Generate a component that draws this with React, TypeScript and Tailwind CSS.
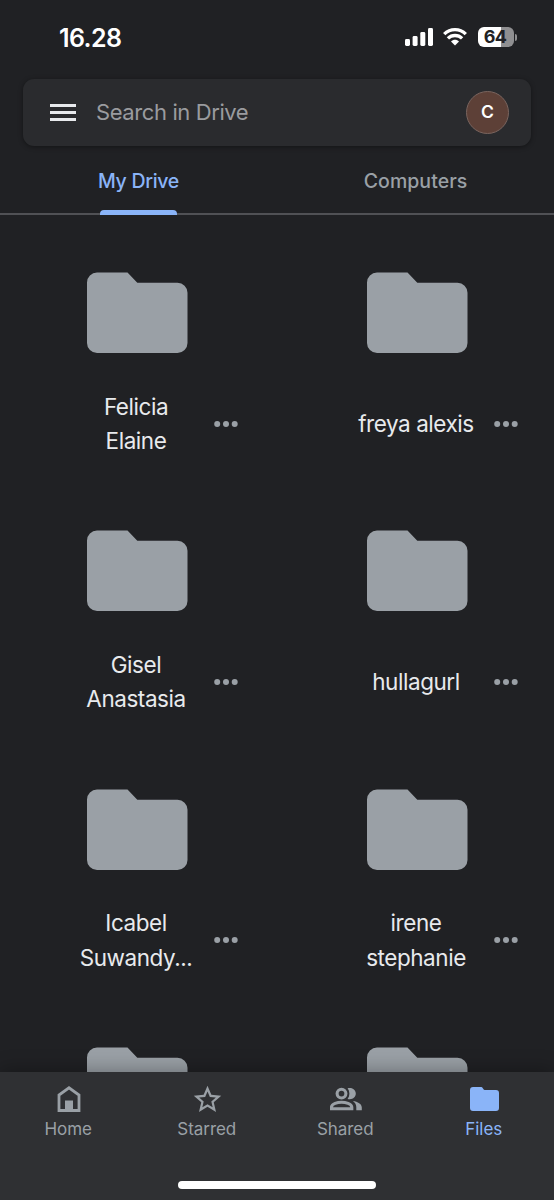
import type { ReactNode } from "react";

const folders = [
  ["Felicia", "Elaine"],
  ["freya alexis"],
  ["Gisel", "Anastasia"],
  ["hullagurl"],
  ["Icabel", "Suwandy..."],
  ["irene", "stephanie"],
  [],
  [],
];

function StatusBar() {
  return (
    <div className="flex h-[79px] shrink-0 items-start justify-between pr-[37px] pl-[59px] text-white">
      <span className="mt-[21px] text-[25px] leading-[34px] font-semibold tracking-[-0.6px]">16.28</span>
      <div className="mt-[27px] flex h-5 items-center">
        <svg className="mr-[10px]" width="28" height="18" viewBox="0 0 28 18" fill="currentColor">
          <rect x="0" y="11" width="5" height="7" rx="1.4" />
          <rect x="7.6" y="8" width="5" height="10" rx="1.4" />
          <rect x="15.3" y="4" width="5" height="14" rx="1.4" />
          <rect x="23" y="0" width="5" height="18" rx="1.4" />
        </svg>
        <svg className="mr-[11px]" width="24" height="18" viewBox="0 0 24 18" fill="none" stroke="currentColor" strokeWidth="3.3">
          <path d="M1.2 6.2C7.2.2 16.8.2 22.8 6.2" />
          <path d="M4.9 10.4c4-3.9 10.2-3.9 14.2 0" />
          <path d="M8 13.4c2.3-2.1 5.7-2.1 8 0L12 17.5z" fill="currentColor" stroke="none" />
        </svg>
        <div className="flex items-center gap-[1px]">
          <div className="flex h-5 w-[36px] items-center justify-center rounded-[6px] bg-linear-to-r from-white from-[64%] to-[#8f8f91] to-[64%] text-[18px] leading-5 font-bold tracking-[-0.6px] text-[#202124]">
            <span className="-ml-[2px]">64</span>
          </div>
          <span className="h-[7px] w-[2px] rounded-r-full bg-[#8f8f91]" />
        </div>
      </div>
    </div>
  );
}

function SearchBar() {
  return (
    <div className="mx-[23px] flex h-[67px] shrink-0 items-center rounded-[11px] bg-[#2a2b2e] pr-[22px] pl-[27px] shadow-[0_1px_5px_rgba(0,0,0,0.4)]">
      <button className="flex w-[26px] flex-col gap-[4px]" aria-label="Menu">
        <span className="h-[3px] bg-[#e8eaed]" />
        <span className="h-[3px] bg-[#e8eaed]" />
        <span className="h-[3px] bg-[#e8eaed]" />
      </button>
      <span className="ml-[20px] flex-1 pb-px text-[22px] leading-7 tracking-[-0.4px] text-[#9a9b9f]">
        Search in Drive
      </span>
      <span className="flex size-[43px] items-center justify-center rounded-full border border-[#79645e] bg-[#5d4037] text-[17.5px] font-semibold text-white">
        C
      </span>
    </div>
  );
}

function Tabs() {
  return (
    <div className="grid h-[69px] shrink-0 grid-cols-2 border-b-2 border-[#505155] text-center text-[19.5px] leading-7 font-medium">
      <div className="relative pt-[21px] tracking-[-0.3px] text-[#8ab4f8]">
        My Drive
        <span className="absolute -bottom-[2px] left-[100px] h-[5px] w-[77px] rounded-t-[4px] bg-[#8ab4f8]" />
      </div>
      <div className="pt-[21px] tracking-[0.05px] text-[#9aa0a6]">Computers</div>
    </div>
  );
}

function FolderItem({ lines }: { lines: string[] }) {
  return (
    <div className="flex h-[258.3px] flex-col items-center">
      <svg className="shrink-0" width="101" height="82" viewBox="0 0 101 82" fill="#9aa0a6">
        <path d="M10 .6H40.5L50.3 10.8H90.5a10 10 0 0 1 10 10V71a10 10 0 0 1-10 10H10A10 10 0 0 1 0 71V10.6a10 10 0 0 1 10-10z" />
      </svg>
      <div className="mt-[35px] flex h-[69px] w-full items-center">
        <div className="ml-[35px] w-[156px] pt-px text-center text-[22.5px] leading-[34.5px] tracking-[-0.45px] text-[#e8eaed]">
          {lines.map((line) => (
            <div key={line}>{line}</div>
          ))}
        </div>
        <svg className="shrink-0" width="24" height="6" viewBox="0 0 24 6" fill="#9aa0a6">
          <circle cx="3.2" cy="3" r="3" />
          <circle cx="12" cy="3" r="3" />
          <circle cx="20.7" cy="3" r="3" />
        </svg>
      </div>
    </div>
  );
}

function NavItem({ label, active, children }: { label: string; active?: boolean; children: ReactNode }) {
  return (
    <div className={`flex flex-col items-center pt-[10px] ${active ? "text-[#8ab4f8]" : "text-[#9aa0a6]"}`}>
      <div className="mr-[1px] flex h-[34px] items-center justify-center">{children}</div>
      <span className="mt-px mr-[2px] text-[17px] leading-6 tracking-[-0.05px]">{label}</span>
    </div>
  );
}

function BottomNav() {
  return (
    <nav className="h-[128px] shrink-0 bg-[#2f3033] shadow-[0_-2px_18px_rgba(0,0,0,0.3)]">
      <div className="grid grid-cols-4">
        <NavItem label="Home">
          <svg width="24" height="28" viewBox="0 0 24 28" fill="none" stroke="currentColor" strokeWidth="2.8">
            <path d="M2 25.5V10l10-7.2L22 10v15.5z" />
            <path d="M8 15.5h8v9.5H8z" fill="currentColor" stroke="none" />
          </svg>
        </NavItem>
        <NavItem label="Starred">
          <svg width="33" height="33" viewBox="0 0 24 24" fill="currentColor">
            <path d="m22 9.24-7.19-.62L12 2 9.19 8.63 2 9.24l5.46 4.73L5.82 21 12 17.27 18.18 21l-1.63-7.03L22 9.24zM12 15.4l-3.76 2.27 1-4.28-3.32-2.88 4.38-.38L12 6.1l1.71 4.04 4.38.38-3.32 2.88 1 4.28L12 15.4z" />
          </svg>
        </NavItem>
        <NavItem label="Shared">
          <svg width="32" height="26" viewBox="0 0 32 26" fill="none" stroke="currentColor" strokeWidth="3.1">
            <circle cx="11.5" cy="7.6" r="4.4" />
            <path d="M1.5 22.7v-1.5c0-3.4 6.2-5 10-5s10.3 1.6 10.3 5v1.5z" />
            <path d="M17.6 2.2c4.6-1.3 8.2 1.5 8.2 5.4s-3.6 6.7-8.2 5.4c2.4-3.3 2.4-7.5 0-10.8zM22.9 15.1c4.8.8 8.9 2.9 8.9 6.4v2.7h-5.5v-3.1c0-2.6-1.4-4.6-3.4-6z" fill="currentColor" stroke="none" />
          </svg>
        </NavItem>
        <NavItem label="Files" active>
          <svg width="29" height="24" viewBox="0 0 29 24" fill="currentColor">
            <path d="M3 0h8.5c1.2 0 1.8 3 3 3H26a3 3 0 0 1 3 3v15a3 3 0 0 1-3 3H3a3 3 0 0 1-3-3V3a3 3 0 0 1 3-3z" />
          </svg>
        </NavItem>
      </div>
      <div className="mx-auto mt-[40px] h-[8px] w-[198px] rounded-full bg-white" />
    </nav>
  );
}

export default function App() {
  return (
    <div className="flex h-[1200px] w-[554px] flex-col overflow-hidden bg-[#202124] font-[Inter,'Liberation_Sans',sans-serif]">
      <StatusBar />
      <SearchBar />
      <Tabs />
      <main className="min-h-0 flex-1 overflow-hidden px-[23px] pt-[57px]">
        <div className="grid grid-cols-2 gap-x-[52px]">
          {folders.map((lines, i) => (
            <FolderItem key={i} lines={lines} />
          ))}
        </div>
      </main>
      <BottomNav />
    </div>
  );
}
